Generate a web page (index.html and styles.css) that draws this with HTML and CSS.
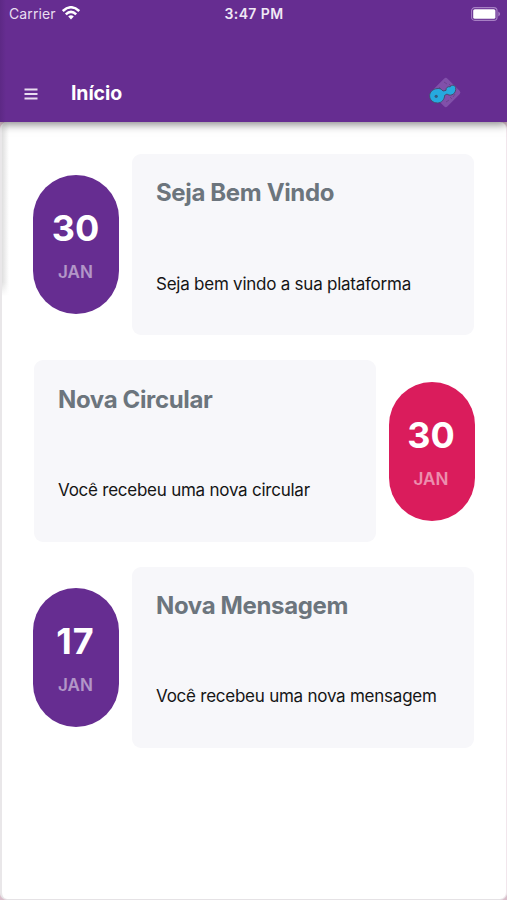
FILE: index.html
```html
<!DOCTYPE html>
<html lang="pt-BR">
<head>
<meta charset="utf-8">
<title>Início</title>
<link rel="stylesheet" href="styles.css">
</head>
<body>
<div class="app">
  <header class="header">
    <div class="status">
      <div class="carrier"><span>Carrier</span>
        <svg class="wifi" width="18" height="14" viewBox="0 0 18 14" fill="none" stroke="#fff" stroke-width="2.5"><path d="M.8 5Q9-2.5 17.2 5M3.8 8.4Q9 3.4 14.2 8.4"/><path d="M6.2 10.5Q9 8 11.8 10.5L9 13.6Z" fill="#fff" stroke="none"/></svg>
      </div>
      <span class="time">3:47 PM</span>
      <svg class="battery" width="30" height="14" viewBox="0 0 30 14"><rect x=".6" y=".6" width="25.4" height="12.8" rx="3.2" fill="none" stroke="#a780c4" stroke-width="1.1"/><rect x="2.2" y="2.2" width="22.2" height="9.6" rx="1.6" fill="#fff"/><path d="M27.3 4.6Q31 7 27.3 9.4Z" fill="#a780c4"/></svg>
    </div>
    <nav class="toolbar">
      <svg class="menu" width="14" height="12" viewBox="0 0 14 12" stroke="#e9def0" stroke-width="1.8"><path d="M.5 1.5h13M.5 6h13M.5 10.5h13"/></svg>
      <h1 class="title">Início</h1>
      <svg class="logo" width="34" height="34" viewBox="0 0 34 34">
        <rect x="6.8" y="5.5" width="22" height="22" rx="2.5" transform="rotate(45 17.8 16.5)" fill="#8150aa"/>
        <path d="M16 6l3 2M21 8l2 2M25 11l2 3M27 18l-2 3M21 24l-3 2M24 23l-2-2M11 11l2 2" stroke="#6d4490" stroke-width="1"/>
        <path d="M9 12.6C11.6 12 13.6 13.2 15 15L18 14.4C17.6 11.6 20.2 10.2 22.2 10.8C23.4 8.6 26.8 8.8 27.6 11.4C28.3 14.4 26.8 18 24 18.8C22 19.6 20 19 19 18L16.6 19.4C16.6 23.4 13.6 27 9.5 27C5 27 1.6 23.9 1.6 19.8C1.6 16 5 12.9 9 12.6Z" fill="#26a9df" stroke="#494b70" stroke-width="1"/>
        <circle cx="8.2" cy="20.3" r="1.6" fill="#345b80"/>
      </svg>
    </nav>
  </header>
  <main class="page">
    <article class="event">
      <div class="date"><strong class="day">30</strong><span class="month">JAN</span></div>
      <section class="card"><h2 class="heading">Seja Bem Vindo</h2><p class="text">Seja bem vindo a sua plataforma</p></section>
    </article>
    <article class="event reverse">
      <div class="date pink"><strong class="day">30</strong><span class="month">JAN</span></div>
      <section class="card"><h2 class="heading">Nova Circular</h2><p class="text">Você recebeu uma nova circular</p></section>
    </article>
    <article class="event">
      <div class="date"><strong class="day wide">17</strong><span class="month">JAN</span></div>
      <section class="card"><h2 class="heading">Nova Mensagem</h2><p class="text">Você recebeu uma nova mensagem</p></section>
    </article>
  </main>
</div>
</body>
</html>
```
FILE: styles.css
```css
* { box-sizing: border-box; }
body { margin: 0; background: #d9bdca; font-family: Inter, "Liberation Sans", sans-serif; }
h1, h2, p { margin: 0; }
.app { display: flex; flex-direction: column; height: 900px; overflow: hidden; }
.header { position: relative; z-index: 1; height: 122px; background: linear-gradient(90deg, #5d2985, #662d91 6px); color: #fff; box-shadow: 0 2px 9px rgba(0,0,0,.5); }
.status { display: grid; grid-template-columns: 1fr auto 1fr; align-items: center; height: 27px; padding: 0 6px 0 9px; }
.carrier { display: flex; align-items: center; gap: 6px; font-size: 14px; letter-spacing: .1px; color: #e9def0; }
.wifi { margin-top: -2px; }
.time { margin-right: 2px; font-size: 14px; font-weight: 600; letter-spacing: .4px; color: #f0e8f5; }
.battery { justify-self: end; }
.toolbar { display: flex; align-items: center; height: 34px; margin-top: 49px; padding: 0 45px 0 24px; }
.menu { margin-top: 1px; }
.title { margin-left: 33px; margin-top: -1px; font-size: 19.5px; line-height: 24px; font-weight: 700; letter-spacing: -.1px; }
.logo { margin-left: auto; }
.page { flex: 1; margin-bottom: 1px; padding: 32px 32px 0 33px; border: solid #e9e7e9; border-width: 0 1px 0 2px; border-right-color: #f1e6ec; border-radius: 7px; box-shadow: 0 1px 0 #e5e2e5; background: linear-gradient(#fff0 92%, #fff) 0 0 / 7px 174px no-repeat, linear-gradient(90deg, #dfdfdf, #fff) 0 0 / 7px 174px no-repeat, #fff; }
.event { display: flex; align-items: center; justify-content: space-between; height: 181.4px; margin: 0 0 25px -2px; }
.reverse { flex-direction: row-reverse; margin-right: -1px; }
.reverse .card { margin-left: 1px; }
.date { display: flex; flex-direction: column; align-items: center; width: 86px; height: 139px; padding: 30px 1px 0 0; border-radius: 43px; background: #662d91; color: #fff; }
.pink { padding-right: 2px; background: #da1c5c; }
.day { font-size: 36px; line-height: 46px; font-weight: 700; }
.wide { letter-spacing: 1px; }
.month { margin-top: 10px; font-size: 17px; line-height: 22px; font-weight: 600; opacity: .5; }
.card { width: 342px; height: 181.4px; padding: 24.3px 24px 0; border-radius: 9px; background: #f7f7fa; }
.heading { font-size: 24px; line-height: 30px; font-weight: 700; letter-spacing: -.36px; color: #6c757d; white-space: nowrap; }
.text { margin-top: 63.4px; font-size: 17px; line-height: 24px; letter-spacing: -.24px; color: #151515; white-space: nowrap; }
```
